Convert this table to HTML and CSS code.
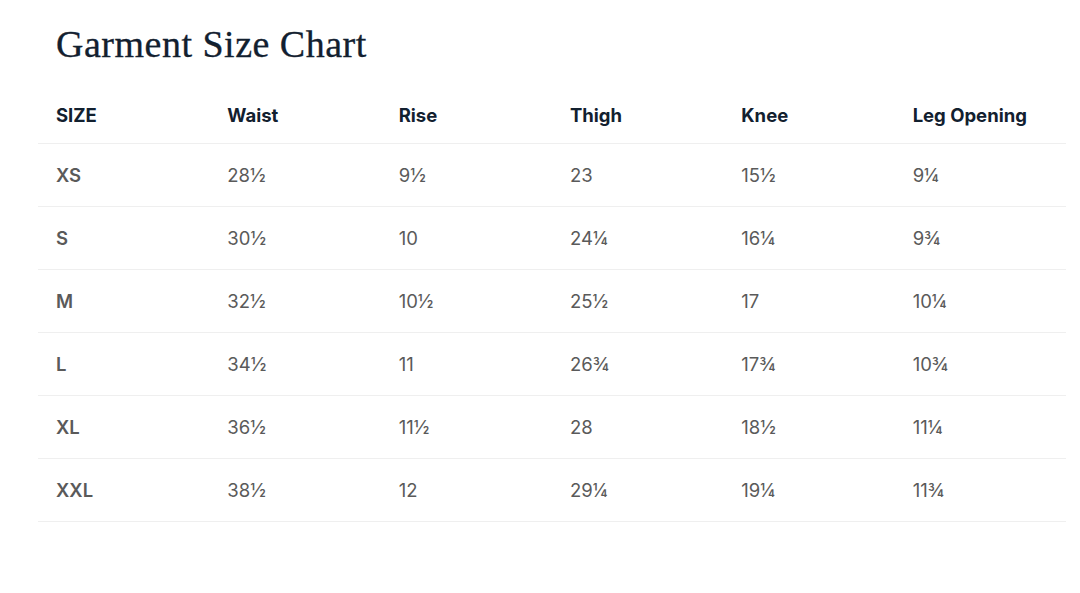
FILE: index.html
```html
<!DOCTYPE html>
<html lang="en">
<head>
<meta charset="utf-8">
<title>Garment Size Chart</title>
<link rel="stylesheet" href="styles.css">
</head>
<body>
<main class="page">
  <h1 class="title">Garment Size Chart</h1>
  <table class="chart">
    <thead>
      <tr><th>SIZE</th><th>Waist</th><th>Rise</th><th>Thigh</th><th>Knee</th><th>Leg Opening</th></tr>
    </thead>
    <tbody>
      <tr><td class="size">XS</td><td>28½</td><td>9½</td><td>23</td><td>15½</td><td>9¼</td></tr>
      <tr><td class="size">S</td><td>30½</td><td>10</td><td>24¼</td><td>16¼</td><td>9¾</td></tr>
      <tr><td class="size">M</td><td>32½</td><td>10½</td><td>25½</td><td>17</td><td>10¼</td></tr>
      <tr><td class="size">L</td><td>34½</td><td>11</td><td>26¾</td><td>17¾</td><td>10¾</td></tr>
      <tr><td class="size">XL</td><td>36½</td><td>11½</td><td>28</td><td>18½</td><td>11¼</td></tr>
      <tr><td class="size">XXL</td><td>38½</td><td>12</td><td>29¼</td><td>19¼</td><td>11¾</td></tr>
    </tbody>
  </table>
</main>
</body>
</html>
```
FILE: styles.css
```css
html, body {
  margin: 0;
  padding: 0;
  background: #ffffff;
}
.page {
  padding: 22px 14px 0 38px;
}
.title {
  margin: 0 0 0 18px;
  font-family: "Liberation Serif", serif;
  font-weight: 400;
  font-size: 38px;
  line-height: 44px;
  color: #12202f;
  letter-spacing: 0.5px;
  -webkit-text-stroke: 0.3px #12202f;
}
.chart {
  margin-top: 20px;
  width: 1028px;
  border-collapse: collapse;
  table-layout: fixed;
  font-family: "Inter", "Liberation Sans", sans-serif;
  font-size: 18.5px;
}
.chart th {
  text-align: left;
  font-weight: 700;
  color: #12202f;
  height: 57px;
  padding: 0 0 0 18px;
  border-bottom: 1px solid #efefef;
  vertical-align: middle;
}
.chart td {
  height: 62px;
  padding: 0 0 0 18px;
  color: #5a5a5a;
  border-bottom: 1px solid #efefef;
  vertical-align: middle;
}
.chart td.size {
  font-weight: 600;
}
```
